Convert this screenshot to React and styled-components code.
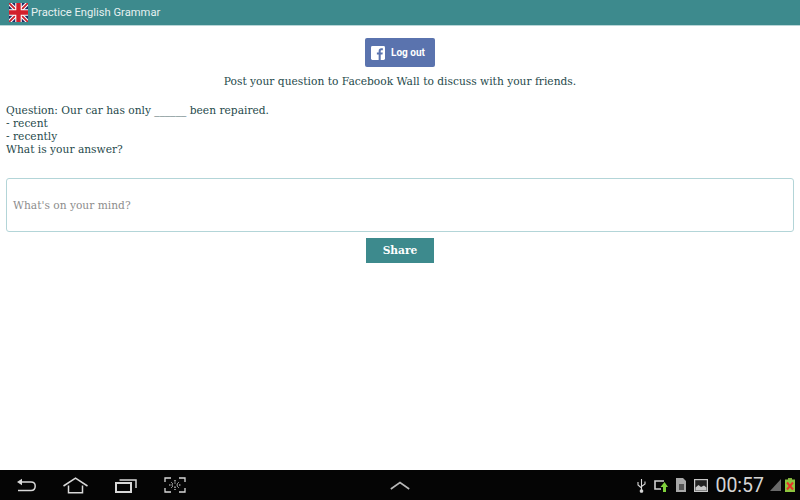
import React from 'react';
import styled, {createGlobalStyle} from 'styled-components';

const GlobalStyle = createGlobalStyle`
  html, body {
    margin: 0;
    padding: 0;
    background: #fff;
  }
  * {
    box-sizing: border-box;
  }
`;
const Screen = styled.div`
  width: 800px;
  height: 500px;
  display: flex;
  flex-direction: column;
  overflow: hidden;
  font-family: 'DejaVu Serif', 'Liberation Serif', serif;
  color: #1f4a4c;
`;
const ActionBar = styled.header`
  height: 26px;
  flex: none;
  display: flex;
  align-items: center;
  gap: 3px;
  padding: 0 0 1px 9px;
  background: #3d8a8d;
  border-bottom: 1px solid #b9d6d8;
  color: #e6f0f0;
  font-family: Roboto, sans-serif;
  font-size: 11.2px;
`;
const Content = styled.main`
  flex: 1;
  display: flex;
  flex-direction: column;
  padding: 12px 6px 0;
`;
const FacebookButton = styled.button`
  align-self: center;
  width: 70px;
  height: 29px;
  display: flex;
  align-items: center;
  gap: 6px;
  padding: 0 0 0 6px;
  background: #5a73ae;
  border: none;
  border-radius: 2px;
  color: #fff;
  font-family: Roboto, sans-serif;
  font-size: 10px;
  font-weight: 700;
`;
const Hint = styled.p`
  margin: 8px 0 0;
  text-align: center;
  font-size: 10.67px;
  line-height: 14px;
`;
const Question = styled.div`
  margin: 15px 0 0;
  font-size: 10.67px;
  line-height: 13px;
  white-space: pre;
`;
const MessageBox = styled.div`
  height: 54px;
  margin-top: 22px;
  display: flex;
  align-items: center;
  padding: 0 6px;
  border: 1px solid #b3d5d8;
  border-radius: 3px;
  color: #8d8d8d;
  font-size: 10.67px;
`;
const ShareButton = styled.button`
  align-self: center;
  width: 68px;
  height: 25px;
  margin-top: 6px;
  background: #3d8a8d;
  border: none;
  color: #fff;
  font-family: 'DejaVu Serif', serif;
  font-size: 10.67px;
  font-weight: 700;
`;
const NavBar = styled.footer`
  height: 30px;
  flex: none;
  display: grid;
  grid-template-columns: 1fr auto 1fr;
  align-items: center;
  background: #050505;
  color: #d8d8d8;
`;
const NavButtons = styled.div`
  display: flex;
  align-items: center;
  gap: 27px;
  padding-left: 16px;
`;
const StatusIcons = styled.div`
  display: flex;
  align-items: center;
  justify-content: flex-end;
  gap: 8px;
  padding-right: 5px;
`;
const Clock = styled.span`
  font-family: Roboto, sans-serif;
  font-size: 19.5px;
  color: #d4d4d4;
  margin: 0 -2px 0 -1px;
`;
const Signal = styled.span`
  display: flex;
  margin-right: -4px;
`;

const FlagIcon = () => (
  <svg width="19" height="19" viewBox="0 0 19 19">
    <rect width="19" height="19" fill="#1f2a66" />
    <path d="M0 0L19 19M19 0L0 19" stroke="#fff" strokeWidth="4" />
    <path d="M0 0L19 19M19 0L0 19" stroke="#c8202c" strokeWidth="1.8" />
    <path d="M9.5 0V19M0 9.5H19" stroke="#fff" strokeWidth="6.5" />
    <path d="M9.5 0V19M0 9.5H19" stroke="#d2202c" strokeWidth="4.4" />
  </svg>
);

const FacebookIcon = () => (
  <svg width="14" height="14" viewBox="0 0 15 15">
    <rect width="15" height="15" rx="1.5" fill="#fff" />
    <path d="M10.4 15V9.2h1.9l.3-2.2h-2.2V5.6c0-.7.2-1.1 1.1-1.1h1.2v-2c-.5-.1-1-.1-1.7-.1-1.7 0-2.8 1-2.8 2.9V7H6.3v2.2h1.9V15z" fill="#5a73ae" />
  </svg>
);

const BackIcon = () => (
  <svg width="20" height="15" viewBox="0 0 20 15" fill="none" stroke="currentColor" strokeWidth="1.5">
    <path d="M3 4H15C17.8 4 19.2 5.6 19.2 8S17.8 12.5 15 12.5H2" />
    <path d="M6 .8V7.2L1 4z" fill="currentColor" stroke="none" />
  </svg>
);

const HomeIcon = () => (
  <svg width="25" height="17" viewBox="0 0 25 17" fill="none" stroke="currentColor" strokeWidth="1.5">
    <path d="M.5 9L12.5 1.2L24.5 9" />
    <path d="M5.5 8.5V15.8H19.5V8.5" />
  </svg>
);

const RecentIcon = () => (
  <svg width="22" height="15" viewBox="0 0 22 15" fill="none" stroke="currentColor" strokeWidth="1.5">
    <rect x="1" y="5" width="15" height="9" strokeWidth="2" />
    <path d="M4.5 2H21V10" />
  </svg>
);

const ScreenshotIcon = () => (
  <svg width="22" height="16" viewBox="0 0 22 16" fill="none" stroke="currentColor" strokeWidth="1.3">
    <path d="M1 5V1H7M15 1H21V5M21 11V15H15M7 15H1V11" />
    <path d="M11 3V6.5M11 9.5V13M5 8H9.5M12.5 8H17" strokeWidth="1.2" strokeDasharray="1.5 1" />
    <path d="M7 5L9 7M15 5L13 7M7 11L9 9M15 11L13 9" strokeWidth="1" stroke="#888" />
  </svg>
);

const ChevronIcon = () => (
  <svg width="20" height="9" viewBox="0 0 20 9" fill="none" stroke="#b8b8b8" strokeWidth="1.6">
    <path d="M.8 8L10 1.5L19.2 8" />
  </svg>
);

const UsbIcon = () => (
  <svg width="9" height="15" viewBox="0 0 9 15" fill="none" stroke="#d8d8d8" strokeWidth="1.1">
    <path d="M4.5 1V14M1 4V7L4.5 10M8 3.5V6L4.5 8.5" />
    <circle cx="4.5" cy="13" r="1.3" fill="#d8d8d8" />
  </svg>
);

const SyncIcon = () => (
  <svg width="14" height="13" viewBox="0 0 14 13">
    <path d="M10 2H1V10H7" fill="none" stroke="#d0d0d0" strokeWidth="1.6" />
    <path d="M9 13V8H6.5L10.5 3L14 8H12V13z" fill="#7fd13b" />
  </svg>
);

const SdIcon = () => (
  <svg width="10" height="14" viewBox="0 0 10 14">
    <path d="M0 0H7L10 3V14H0z" fill="#a8a8a8" />
    <rect x="3" y="6" width="5" height="6" fill="#555" />
  </svg>
);

const PictureIcon = () => (
  <svg width="14" height="13" viewBox="0 0 14 13">
    <rect x=".6" y=".6" width="12.8" height="11.8" fill="#222" stroke="#c8c8c8" strokeWidth="1.2" />
    <path d="M1.5 11V8.5L4.5 6L7 8L10 6.5L12.5 8.5V11.5H1.5z" fill="#c8c8c8" />
  </svg>
);

const SignalIcon = () => (
  <svg width="11" height="12" viewBox="0 0 11 12">
    <path d="M0 12L11 0V12z" fill="#6a6a6a" />
  </svg>
);

const BatteryIcon = () => (
  <svg width="10" height="14" viewBox="0 0 10 14">
    <rect x="3" y="0" width="4" height="2" fill="#7fae3a" />
    <rect x="0" y="1.5" width="10" height="12.5" fill="#8ec63f" />
    <path d="M2 4.5L8 11.5M8 4.5L2 11.5" stroke="#e8342a" strokeWidth="2" />
  </svg>
);

export default function App() {
  return (
    <Screen>
      <GlobalStyle />
      <ActionBar>
        <FlagIcon />
        <span>Practice English Grammar</span>
      </ActionBar>
      <Content>
        <FacebookButton>
          <FacebookIcon />
          Log out
        </FacebookButton>
        <Hint>Post your question to Facebook Wall to discuss with your friends.</Hint>
        <Question>
          {'Question: Our car has only ______ been repaired.\n- recent\n- recently\nWhat is your answer?'}
        </Question>
        <MessageBox>What's on your mind?</MessageBox>
        <ShareButton>Share</ShareButton>
      </Content>
      <NavBar>
        <NavButtons>
          <BackIcon />
          <HomeIcon />
          <RecentIcon />
          <ScreenshotIcon />
        </NavButtons>
        <ChevronIcon />
        <StatusIcons>
          <UsbIcon />
          <SyncIcon />
          <SdIcon />
          <PictureIcon />
          <Clock>00:57</Clock>
          <Signal>
            <SignalIcon />
          </Signal>
          <BatteryIcon />
        </StatusIcons>
      </NavBar>
    </Screen>
  );
}
